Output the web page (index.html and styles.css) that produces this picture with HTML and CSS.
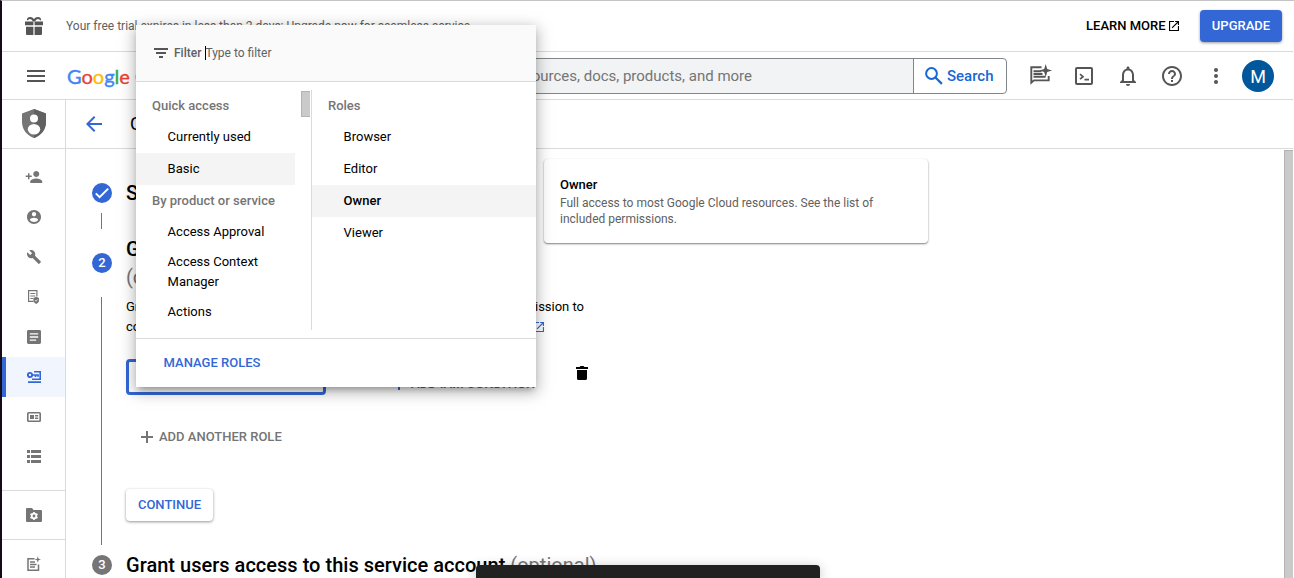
FILE: index.html
```html
<!DOCTYPE html>
<html lang="en">
<head>
<meta charset="utf-8">
<title>Create service account</title>
<link rel="stylesheet" href="styles.css">
</head>
<body>
<div class="app">
  <div class="promo">
    <svg class="gift" viewBox="0 0 18 18"><path d="M0 4.500h18v4H0zM1 9.500h16V17a1 1 0 0 1-1 1H2a1 1 0 0 1-1-1z"/><path d="M9 4.500C8 1.500 6.500 1 5 1S2.500 2 3 3M9 4.500c1-3 2.500-3.500 4-3.500s2.500 1 2 2" fill="none" stroke="#555" stroke-width="2"/><path d="M9 4.500v14M0 9h18" stroke="#fff" stroke-width="1.200"/></svg>
    <span class="promo-text">Your free trial expires in less than 2 days: Upgrade now for seamless service.</span>
    <a class="learn">LEARN MORE <svg viewBox="3 3 18 18"><path d="M19 19H5V5h7V3H3v18h18v-9h-2v7zM14 3v2h3.600l-9.800 9.800 1.400 1.400L19 6.400V10h2V3h-7z"/></svg></a>
    <button class="upgrade">UPGRADE</button>
  </div>
  <header class="header">
    <svg class="burger" viewBox="0 0 18 12"><path d="M0 0h18v2H0zM0 5h18v2H0zM0 10h18v2H0z"/></svg>
    <div class="logo"><span class="b">G</span><span class="r">o</span><span class="y">o</span><span class="b">g</span><span class="g">l</span><span class="r">e</span><span class="cloud">Cloud</span></div>
    <div class="search">
      <div class="search-input">Search (/) for resources, docs, products, and more</div>
      <div class="search-btn"><svg viewBox="0 0 18 18"><circle cx="6.500" cy="6.500" r="5.400" fill="none" stroke="#1967d2" stroke-width="2"/><path d="M10.500 10.500l6.400 6.400" stroke="#1967d2" stroke-width="2.200"/></svg>Search</div>
    </div>
    <div class="tools">
      <svg viewBox="0 0 24 24"><path d="M13.500 3.300H3.300v15.400L6 16.400h14.700V12M5.500 7.300h8M5.500 10h9M5.500 12.800h12" fill="none" stroke="#555" stroke-width="1.900"/><path d="M17.700 0l1.500 5.100 4.900 1.500-4.900 1.500-1.500 5.100-1.500-5.100-4.900-1.500 4.900-1.500z"/></svg>
      <svg viewBox="0 0 24 24"><rect x="4" y="4" width="16" height="16" rx="1" fill="none" stroke="#555" stroke-width="2"/><path d="M8 10.200l3 2.500-3 2.500M12.500 15.700H17" fill="none" stroke="#555" stroke-width="1.700"/></svg>
      <svg viewBox="0 0 24 24"><path d="M12 22c1.100 0 2-.9 2-2h-4c0 1.100.9 2 2 2zm6-6v-5c0-3.070-1.630-5.640-4.500-6.320V4c0-.83-.67-1.500-1.500-1.500s-1.500.67-1.500 1.500v.68C7.640 5.360 6 7.920 6 11v5l-2 2v1h16v-1l-2-2zm-2 1H8v-6c0-2.480 1.510-4.500 4-4.500s4 2.020 4 4.500v6z"/></svg>
      <svg viewBox="0 0 24 24"><path d="M11 18h2v-2h-2v2zm1-16C6.480 2 2 6.480 2 12s4.480 10 10 10 10-4.480 10-10S17.520 2 12 2zm0 18c-4.410 0-8-3.590-8-8s3.590-8 8-8 8 3.590 8 8-3.590 8-8 8zm0-14c-2.210 0-4 1.790-4 4h2c0-1.100.9-2 2-2s2 .9 2 2c0 2-3 1.750-3 5h2c0-2.250 3-2.500 3-5 0-2.210-1.790-4-4-4z"/></svg>
      <svg viewBox="0 0 24 24"><circle cx="12" cy="6" r="2"/><circle cx="12" cy="12" r="2"/><circle cx="12" cy="18" r="2"/></svg>
    </div>
    <div class="avatar">M</div>
  </header>
  <div class="work">
    <nav class="side">
      <div class="side-head"><svg viewBox="0 0 24 29"><path d="M12 0L0 4.500V13c0 7.500 5 13.600 12 16 7-2.400 12-8.500 12-16V4.500z" fill="#757575"/><path d="M12 0v29c7-2.400 12-8.500 12-16V4.500z" fill="#616161"/><circle cx="12" cy="9.500" r="4" fill="#fff"/><ellipse cx="12" cy="20.300" rx="6.200" ry="5.300" fill="#fff"/></svg></div>
      <div class="side-list">
        <div class="item"><svg class="i18" viewBox="0 0 24 24"><path d="M15 12c2.210 0 4-1.790 4-4s-1.790-4-4-4-4 1.790-4 4 1.790 4 4 4zm-9-2V7H4v3H1v2h3v3h2v-3h3v-2H6zm9 4c-2.670 0-8 1.340-8 4v2h16v-2c0-2.660-5.330-4-8-4z"/></svg></div>
        <div class="item"><svg viewBox="2 2 20 20"><path d="M12 2C6.480 2 2 6.480 2 12s4.480 10 10 10 10-4.480 10-10S17.520 2 12 2zm0 3c1.660 0 3 1.340 3 3s-1.340 3-3 3-3-1.340-3-3 1.340-3 3-3zm0 14.200c-2.500 0-4.710-1.280-6-3.220.03-1.990 4-3.080 6-3.080 1.990 0 5.970 1.090 6 3.080-1.290 1.940-3.500 3.220-6 3.220z"/></svg></div>
        <div class="item"><svg viewBox="1 1 22 22"><path d="M22.700 19l-9.100-9.100c.9-2.300.4-5-1.500-6.900-2-2-5-2.400-7.400-1.300L9 6 6 9 1.600 4.700C.4 7.100.9 10.100 2.900 12.100c1.900 1.900 4.600 2.400 6.900 1.500l9.100 9.100c.4.4 1 .4 1.400 0l2.300-2.300c.5-.4.5-1.100.1-1.400z"/></svg></div>
        <div class="item"><svg viewBox="0 0 14 14"><path d="M6.500 11.400H1.600V.6h8.300v6M3.300 3.500h5M3.300 6h5M3.300 8.500h3" fill="none" stroke="#757575" stroke-width="1.200"/><path d="M9.200 6.800L12 8v2.300c0 1.700-1.200 2.900-2.800 3.600-1.600-.7-2.800-1.900-2.800-3.600V8z"/><path d="M8 10.200l1 1 1.600-1.700" stroke="#fff" fill="none" stroke-width=".8"/></svg></div>
        <div class="item"><svg viewBox="2 2 20 20"><path d="M20 2H4c-1.100 0-2 .9-2 2v16c0 1.100.9 2 2 2h16c1.100 0 2-.9 2-2V4c0-1.100-.9-2-2-2zM15 17.500H6v-2h9zm3-4.500H6v-2h12zm0-4.500H6v-2h12z"/></svg></div>
        <div class="item active"><svg viewBox="0 0 14 14"><circle cx="3" cy="5" r="2.100" fill="none" stroke="#3367d6" stroke-width="1.900"/><path d="M5 5h6v1.800M8.500 5v2" fill="none" stroke="#3367d6" stroke-width="1.700"/><path d="M7 1h7v9H5V8.500h7.400V2.600H7zM1 11.200h13v1.800H1z"/></svg></div>
        <div class="item"><svg viewBox="0 0 14 14"><rect x=".8" y="2.800" width="12.400" height="8.400" rx=".8" fill="none" stroke="#757575" stroke-width="1.600"/><path d="M3 5h4v4H3zM8 5h3.200v1.400H8zM8 7.600h3.200V9H8z"/></svg></div>
        <div class="item"><svg viewBox="0 0 14 14"><path d="M0 0h3v3H0zM4 0h10v3H4zM0 5h3v3H0zM4 5h10v3H4zM0 10h3v3H0zM4 10h10v3H4z"/></svg></div>
      </div>
      <div class="side-box"><svg viewBox="0 0 16 14"><path d="M1 0h5l1.500 2H15a1 1 0 0 1 1 1v10a1 1 0 0 1-1 1H1a1 1 0 0 1-1-1V1a1 1 0 0 1 1-1z"/><circle cx="8" cy="8" r="2.300" fill="none" stroke="#fff" stroke-width="1.800"/><path d="M8 4v1.500M8 10.500V12M4.500 6l1.400.8M10.100 9.200l1.400.8M4.500 10l1.400-.8M10.100 6.800l1.400-.8" stroke="#fff" stroke-width="1.700"/></svg></div>
      <div class="side-box"><svg viewBox="0 0 16 14"><path d="M8.500 1.700H2v11.500h10.500V7.500M4 5h5M4 7.500h6.500M4 10h5" fill="none" stroke="#757575" stroke-width="1.500"/><path d="M11.800-.7l.8 2.400 2.400.8-2.400.8-.8 2.400-.8-2.400-2.400-.8 2.400-.8z"/></svg></div>
    </nav>
    <main class="main">
      <div class="title"><svg viewBox="0 0 16 16"><path d="M16 7H3.800l5.600-5.600L8 0 0 8l8 8 1.400-1.400L3.800 9H16z"/></svg><h1>Create service account</h1></div>
      <div class="page">
        <div class="steps">
          <section class="step first">
            <div class="rail"><span class="dot"><svg viewBox="0 0 20 20"><path d="M3.800 10.400l3.800 3.800 8.600-8.600" fill="none" stroke="#fff" stroke-width="2"/></svg></span><i></i></div>
            <h2>Service account details</h2>
          </section>
          <section class="step second">
            <div class="rail"><span class="dot">2</span><i></i></div>
            <div class="content">
              <h2>Grant this service account access to project <br><em>(optional)</em></h2>
              <p><span class="lead">Grant this service account access to My Project 123 so that it has permission to</span><br>complete specific actions on the resources in your project. <a>Learn more <svg viewBox="3 3 18 18"><path d="M19 19H5V5h7V3H3v18h18v-9h-2v7zM14 3v2h3.600l-9.800 9.800 1.400 1.400L19 6.400V10h2V3h-7z"/></svg></a></p>
              <div class="role-row">
                <div class="field"></div>
                <div class="cond"><svg viewBox="0 0 12 12"><path d="M5 0h2v5h5v2H7v5H5V7H0V5h5z"/></svg>ADD IAM CONDITION</div>
                <svg class="trash" viewBox="0 0 12 14"><path d="M0 1h3.500l1-1h3l1 1H12v2H0zM1 4h10v8.500a1.500 1.500 0 0 1-1.500 1.500h-7A1.500 1.500 0 0 1 1 12.500z"/></svg>
              </div>
              <div class="another"><svg viewBox="0 0 12 12"><path d="M5 0h2v5h5v2H7v5H5V7H0V5h5z"/></svg>ADD ANOTHER ROLE</div>
              <button class="continue">CONTINUE</button>
            </div>
          </section>
          <section class="step third">
            <div class="rail"><span class="dot grey">3</span></div>
            <h2>Grant users access to this service account <em>(optional)</em></h2>
          </section>
        </div>
        <div class="scrollbar"></div>
      </div>
    </main>
  </div>
</div>
<aside class="hint"><b>Owner</b><p>Full access to most Google Cloud resources. See the list of included permissions.</p></aside>
<div class="picker">
  <div class="filter"><svg viewBox="0 0 14 10"><path d="M0 0h14v2H0zM2 4h10v2H2zM5 8h4v2H5z"/></svg><b>Filter</b><span class="caret"></span><span>Type to filter</span></div>
  <div class="cols">
    <div class="groups">
      <div class="head">Quick access</div>
      <div class="row">Currently used</div>
      <div class="row sel">Basic</div>
      <div class="head last">By product or service</div>
      <div class="row svc">Access Approval</div>
      <div class="row svc">Access Context Manager</div>
      <div class="row svc">Actions</div>
      <div class="thumb"></div>
    </div>
    <div class="roles">
      <div class="head">Roles</div>
      <div class="row">Browser</div>
      <div class="row">Editor</div>
      <div class="row sel strong">Owner</div>
      <div class="row">Viewer</div>
    </div>
  </div>
  <div class="foot">MANAGE ROLES</div>
</div>
<div class="toast"></div>
</body>
</html>
```
FILE: styles.css
```css
* { box-sizing: border-box; }
body { margin: 0; height: 578px; overflow: hidden; position: relative; background: #fff; color: #000; font: 13px/20px Roboto, sans-serif; }
h1, h2, p { margin: 0; }
svg { display: block; flex: none; fill: #555; overflow: visible; }
button { font: 500 13px/20px Roboto, sans-serif; border: 0; border-radius: 4px; padding: 0; }
.app { height: 578px; border-left: 2px solid #150a17; border-top: 1px solid #c4c4c4; padding-right: 1px; display: flex; flex-direction: column; overflow: hidden; }
.promo { height: 51px; flex: none; display: flex; align-items: center; border-bottom: 1px solid #dadada; padding: 0 11px 0 23px; }
.gift { width: 18px; height: 18px; }
.promo-text { margin-left: 23px; font-size: 12px; color: #616161; white-space: nowrap; }
.learn { margin-left: auto; display: flex; align-items: center; gap: 3.5px; font-weight: 500; }
.learn svg { width: 10px; height: 10px; fill: #000; }
.upgrade { margin-left: 21px; width: 82px; height: 32px; background: #3367d6; color: #fff; box-shadow: 0 1px 3px rgba(0,0,0,.4); }
.header { height: 48px; flex: none; display: flex; align-items: center; border-bottom: 1px solid #dadada; padding: 0 19px 0 25px; }
.burger { width: 18px; height: 12px; }
.logo { margin-left: 22px; width: 160px; font: 20px/24px Lato, sans-serif; -webkit-text-stroke: .4px currentColor; white-space: nowrap; }
.b { color: #4285f4; } .r { color: #ea4335; } .y { color: #fbbc04; } .g { color: #34a853; }
.cloud { margin-left: 5px; color: #5f6368; -webkit-text-stroke: 0; }
.search { margin-left: auto; width: 620px; height: 36px; display: flex; border: 1px solid #80868b; border-radius: 4px; overflow: hidden; }
.search-input { flex: 1; background: #f1f3f4; color: #757575; font-size: 15px; line-height: 34px; padding-right: 161px; text-align: right; white-space: nowrap; }
.search-btn { width: 93px; border-left: 1px solid #80868b; display: flex; align-items: center; gap: 4px; padding-left: 11px; color: #1967d2; font-size: 15px; font-weight: 500; }
.search-btn svg { width: 18px; height: 18px; }
.tools { display: flex; gap: 20px; margin-left: 21px; }
.tools svg { width: 24px; height: 24px; }
.avatar { margin-left: 14px; width: 32px; height: 32px; border-radius: 50%; background: #01579b; color: #fff; font-size: 18px; line-height: 33px; text-align: center; }
.work { flex: 1; display: flex; min-height: 0; }
.side { width: 64px; flex: none; border-right: 1px solid #dadada; overflow: hidden; }
.side svg { fill: #757575; width: 14px; height: 14px; }
.side-head { height: 49px; border-bottom: 1px solid #dadada; padding: 9px 0 0 20px; }
.side .side-head svg { width: 24px; height: 29px; }
.side-list { padding: 8px 0 13px; }
.item { height: 40px; display: flex; align-items: center; justify-content: center; padding-left: 1px; }
.side .i18 { width: 18px; height: 18px; }
.item.active { background: #f0f5fe; border-left: 4px solid #3367d6; padding: 0 3px 0 0; }
.side .active svg { fill: #3367d6; }
.side-box { height: 49px; border-top: 1px solid #dadada; display: flex; align-items: center; justify-content: center; padding: 0 0 0 1px; }
.side .side-box svg { width: 16px; height: 14px; }
.main { flex: 1; min-width: 0; display: flex; flex-direction: column; }
.title { height: 49px; flex: none; border-bottom: 1px solid #dadada; display: flex; align-items: center; padding-left: 20px; gap: 28px; }
.title svg { width: 16px; height: 16px; fill: #3367d6; }
h1 { font-size: 18px; font-weight: 400; }
.page { flex: 1; display: flex; min-height: 0; overflow: hidden; }
.steps { flex: 1; padding: 30px 0 0 26px; }
.scrollbar { width: 9px; margin-top: 1px; background: #cacaca; border: solid #b3b3b3; border-width: 1px 0 0 1px; }
.step { display: flex; gap: 14px; }
.step.first { height: 56px; }
.step.second { height: 316px; }
.step.third { height: 27px; }
.rail { width: 20px; display: flex; flex-direction: column; align-items: center; padding-top: 4px; }
.second .rail { padding-top: 18px; }
.dot { width: 20px; height: 20px; flex: none; border-radius: 50%; background: #3367d6; color: #fff; font-weight: 500; text-align: center; }
.dot.grey { background: #757575; }
.rail i { width: 1px; height: 16px; margin: 10px 1px 0 0; background: #757575; }
.second .rail i { height: 248px; margin-top: 24px; }
h2 { font-size: 20px; line-height: 28px; font-weight: 500; letter-spacing: .02px; white-space: nowrap; }
h2 em { font-style: normal; font-weight: 400; color: #757575; }
.content { width: 480px; }
.content p { margin-top: 6px; white-space: nowrap; }
.content p a { color: #3367d6; }
.content p svg { display: inline-block; width: 10px; height: 10px; margin-left: -1px; fill: #3367d6; vertical-align: -1px; }
.lead { letter-spacing: -.025px; }
.role-row { display: flex; margin-top: 22px; height: 36px; }
.field { width: 200px; border: 3px solid #3367d6; border-radius: 4px; }
.cond { display: flex; align-items: center; gap: 6px; margin: 14px 0 0 67px; height: 22px; width: 183px; font-weight: 500; color: #3367d6; white-space: nowrap; }
.cond svg { width: 12px; height: 12px; fill: #3367d6; }
.trash { width: 12px; height: 14px; margin-top: 7px; fill: #000; }
.another { display: flex; align-items: center; gap: 6px; margin: 32px 0 0 15px; font-weight: 500; color: #757575; }
.another svg { width: 12px; height: 12px; fill: #757575; }
.continue { display: block; margin-top: 42px; width: 87px; height: 32px; background: #fff; color: #3367d6; box-shadow: 0 1px 3px rgba(0,0,0,.42); }
.hint { position: absolute; left: 544px; top: 159px; width: 384px; height: 84px; padding: 16px; background: #fff; border-radius: 4px; box-shadow: 0 1px 2px rgba(0,0,0,.5); }
.hint b { display: block; font-weight: 500; }
.hint p { font-size: 12px; line-height: 16px; color: #616161; }
.picker { position: absolute; left: 136px; top: 25px; width: 400px; height: 362px; background: #fff; box-shadow: 0 5px 6px -3px rgba(0,0,0,.25), 0 4px 12px 1px rgba(0,0,0,.2), 0 4px 18px 3px rgba(0,0,0,.1); }
.filter { height: 57px; display: flex; align-items: center; background: #fafafa; border-bottom: 1px solid #dadada; padding-left: 18px; font-size: 12px; color: #616161; }
.filter svg { width: 14px; height: 10px; margin-right: 6px; }
.filter b { font-weight: 500; }
.caret { width: 1px; height: 14px; margin: 0 -1px 0 4px; background: #000; }
.cols { display: flex; height: 256px; padding: 8px 0; }
.groups { width: 176px; border-right: 1px solid #dadada; position: relative; }
.roles { flex: 1; }
.head { height: 31px; line-height: 32px; padding-left: 16px; font-weight: 500; color: #757575; }
.head.last { height: 32px; }
.row { height: 32px; line-height: 32px; padding-left: 31.6px; }
.groups .row { width: 159px; }
.row.svc { height: auto; line-height: 20px; padding: 5px 0 5px 31.6px; }
.sel { background: #f4f4f4; }
.strong { font-weight: 500; }
.thumb { position: absolute; right: 1px; top: 1px; width: 9px; height: 26px; background: #cacaca; border: 1px solid #b3b3b3; border-right: 0; }
.foot { border-top: 1px solid #dadada; height: 49px; padding-left: 27.6px; line-height: 48px; font-weight: 500; color: #3367d6; }
.toast { position: absolute; left: 476px; top: 565px; width: 344px; height: 13px; border-radius: 4px 4px 0 0; background: #212121; box-shadow: 0 2px 12px rgba(0,0,0,.25); }
```
